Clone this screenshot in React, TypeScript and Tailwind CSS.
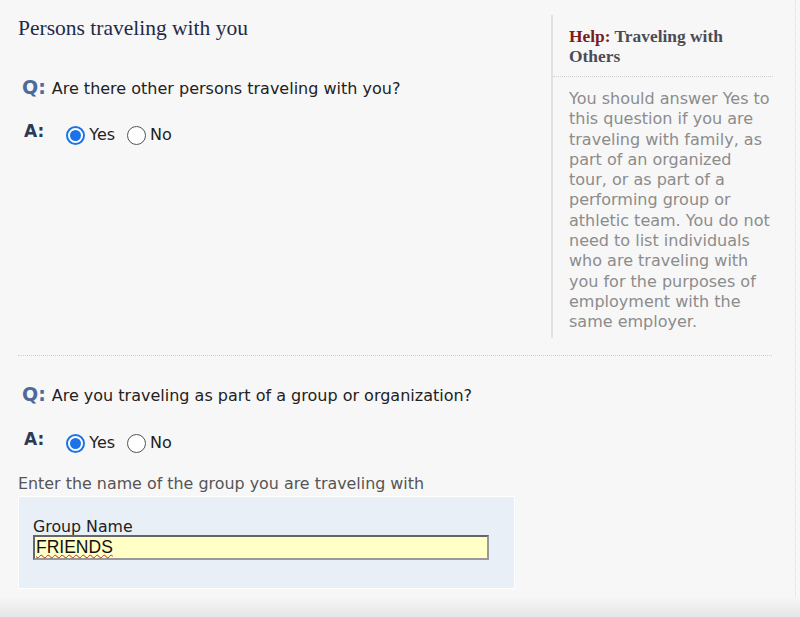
const sans = "font-['DejaVu_Sans','Verdana',sans-serif]"
const serif = "font-['Liberation_Serif','Times_New_Roman',serif]"

function Radio({ checked, label }: { checked?: boolean; label: string }) {
  return (
    <span className="flex items-center gap-[4px]">
      {checked ? (
        <span className="flex h-[19px] w-[19px] items-center justify-center rounded-full border-2 border-[#1a73e8] bg-white">
          <span className="h-[11px] w-[11px] rounded-full bg-[#1a73e8]" />
        </span>
      ) : (
        <span className="h-[19px] w-[19px] rounded-full border border-[#555] bg-white" />
      )}
      <span className="text-[16px] leading-[20px] text-[#222]">{label}</span>
    </span>
  )
}

function Question({ text }: { text: string }) {
  return (
    <div className="flex h-[24px] items-baseline gap-[6px] pl-[4px]">
      <span className="text-[19px] font-bold leading-[24px] text-[#4b6b9b]">Q:</span>
      <span className="text-[16px] leading-[24px] text-[#222]">{text}</span>
    </div>
  )
}

function Answer() {
  return (
    <div className="flex h-[20px] items-center pl-[6px]">
      <span className="mr-[22px] -mt-[8px] text-[17px] font-bold leading-[20px] text-[#2c3a55]">A:</span>
      <div className="flex items-center gap-[12px]">
        <Radio checked label="Yes" />
        <Radio label="No" />
      </div>
    </div>
  )
}

export default function App() {
  return (
    <div className={`relative h-[617px] w-[800px] overflow-hidden bg-[#f7f7f7] ${sans}`}>
      <div className="h-full w-[796px] border-r border-dotted border-[#dcdcdc]">
        <div className="flex pl-[18px]">
          <div className="w-[533px]">
            <h1 className={`pt-[16px] text-[21.5px] leading-[24px] text-[#1f2a48] ${serif}`}>
              Persons traveling with you
            </h1>
            <div className="mt-[35px]">
              <Question text="Are there other persons traveling with you?" />
            </div>
            <div className="mt-[26px]">
              <Answer />
            </div>
          </div>
          <div className="mt-[15px] h-[323px] w-[222px] border-l-2 border-[#e2e2e2]">
            <div className={`px-[16px] pt-[11px] pb-[10px] text-[17.4px] font-bold leading-[20px] text-[#4b4b55] ${serif}`}>
              <div className="flex gap-[4px]">
                <span className="text-[#7b1c1c]">Help:</span>
                <span>Traveling with</span>
              </div>
              <div>Others</div>
            </div>
            <div className="border-t border-dotted border-[#d0d0d0]" />
            <p className="pl-[16px] pr-[2px] pt-[12px] text-[16px] leading-[20.3px] text-[#8c8c8c]">
              You should answer Yes to this question if you are traveling with family, as part of an
              organized tour, or as part of a performing group or athletic team. You do not need to
              list individuals who are traveling with you for the purposes of employment with the
              same employer.
            </p>
          </div>
        </div>

        <div className="ml-[18px] mt-[17px] w-[754px] border-t border-dotted border-[#cfcfcf]" />

        <div className="pl-[18px]">
          <div className="mt-[26px]">
            <Question text="Are you traveling as part of a group or organization?" />
          </div>
          <div className="mt-[27px]">
            <Answer />
          </div>
          <p className="mt-[21px] text-[15.9px] leading-[20px] text-[#555]">
            Enter the name of the group you are traveling with
          </p>
          <div className="mt-[2px] w-[497px] border border-white bg-[#e9eff6] px-[14px] pt-[21px] pb-[28px]">
            <label className="block text-[15.8px] leading-[17px] text-[#222]">Group Name</label>
            <div className="h-[25px] w-[456px] border-2 border-t-[#666] border-l-[#666] border-r-[#999] border-b-[#999] bg-[#ffffc6] px-[1px] font-['Liberation_Sans',Arial,sans-serif] text-[17.5px] leading-[21px] text-[#111]">
              <span className="underline decoration-[#d02020] decoration-wavy decoration-1">FRIENDS</span>
            </div>
          </div>
        </div>
      </div>
      <div className="absolute bottom-0 left-0 h-[20px] w-full bg-[linear-gradient(to_bottom,#f7f7f7,#e6e6e6)]" />
    </div>
  )
}
